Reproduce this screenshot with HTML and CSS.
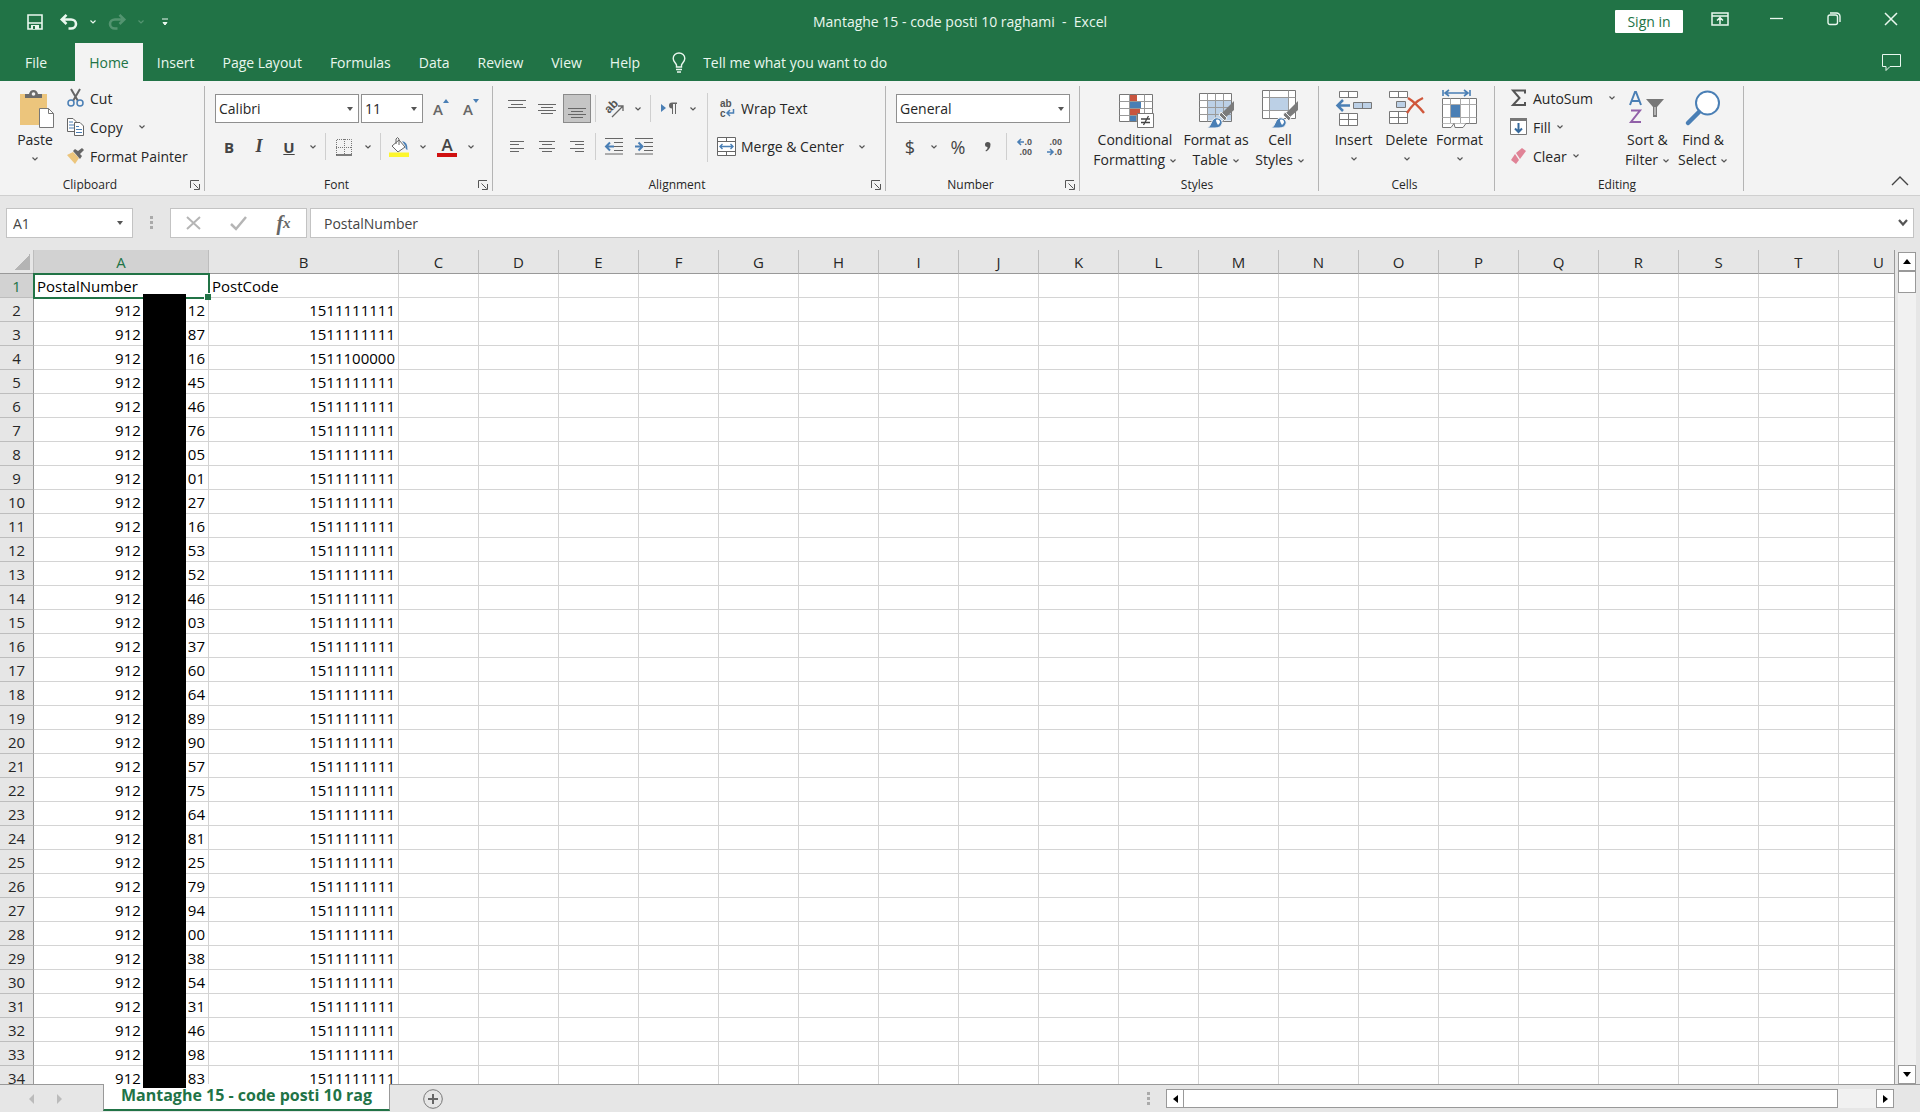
FILE: index.html
```
<!DOCTYPE html>
<html lang="en">
<head>
    <meta charset="UTF-8">
    <meta name="viewport" content="width=device-width, initial-scale=1.0">
    <title>Mantaghe 15 - code posti 10 raghami - Excel</title>
    <link rel="stylesheet" href="styles.css">
</head>
<body>
    <!-- shared symbols -->
    <svg class="symbols" aria-hidden="true">
        <symbol id="chev" viewBox="0 0 8 8"><path d="M1.5 2.5 4 5l2.5-2.5" fill="none" stroke="currentColor" stroke-width="1.2"/></symbol>
        <symbol id="launch" viewBox="0 0 10 10"><path d="M.5 8V.5H9M3.500 3.500 8.500 8.500M9.500 4v5.500H4" fill="none" stroke="#555"/></symbol>
        <symbol id="brush" viewBox="0 0 28 28">
            <path d="M27 0v9l-8 7-4-4z" fill="#7b7b7b"/>
            <path d="m14 11 6 6-2 3-6-6z" fill="#7b7b7b" stroke="#f3f3f3"/>
            <path d="M0 27c4-1 4-8 8-10 4-1 8 2 7 6-1 3-4 4-7 4z" fill="#4a7fb5" stroke="#f3f3f3"/>
            <path d="M9 19c2-1 4 0 4 2 0 1-1 2-2 3-1-2-2-3-2-5z" fill="#fff"/>
        </symbol>
    </svg>

    <header class="titlebar">
        <div class="quick">
            <button class="qbtn" aria-label="Save"><svg width="16" height="16" viewBox="0 0 16 16"><path d="M1 1h14v14H1zM1 9h14" fill="none" stroke="#e9f7ee" stroke-width="1.600"/><path d="M4 11h8v4H4z" fill="#e9f7ee"/><path d="M6 12h2v3H6z" fill="#217346"/></svg></button>
            <button class="qbtn" aria-label="Undo"><svg width="18" height="16" viewBox="0 0 18 16"><path d="M1.500 5.500H11a5 4.500 0 0 1 0 9H8.500M6.500.8 1.800 5.500 6.500 10" fill="none" stroke="#e9f7ee" stroke-width="2.600"/></svg></button>
            <button class="qchev" aria-label="Undo list"><svg class="chev"><use href="#chev"/></svg></button>
            <button class="qbtn faded" aria-label="Redo"><svg width="18" height="16" viewBox="0 0 18 16"><path d="M16.500 5.500H7a5 4.500 0 0 0 0 9h2.500M11.500.8l4.700 4.700-4.700 4.500" fill="none" stroke="#e9f7ee" stroke-width="2.600"/></svg></button>
            <button class="qchev faded" aria-label="Redo list"><svg class="chev"><use href="#chev"/></svg></button>
            <button class="qbtn" aria-label="Customize Quick Access Toolbar"><svg width="6" height="8" viewBox="0 0 6 8"><path d="M0 1h6M1 4.500h4L3 7z" fill="#e9f7ee" stroke="#e9f7ee"/></svg></button>
        </div>
        <div class="doc-title">Mantaghe 15 - code posti 10 raghami  -  Excel</div>
        <div class="window-tools">
            <button class="signin">Sign in</button>
            <button class="wbtn" aria-label="Ribbon Display Options"><svg width="18" height="14" viewBox="0 0 18 14"><path d="M1 1h16v12H1zM1 4h16M9 12V6M6 8.500 9 5.500l3 3" fill="none" stroke="#e9f7ee" stroke-width="1.500"/></svg></button>
            <button class="wbtn" aria-label="Minimize"><svg width="14" height="14" viewBox="0 0 14 14"><path d="M0 6.500h13" stroke="#e9f7ee" stroke-width="1.300"/></svg></button>
            <button class="wbtn" aria-label="Restore"><svg width="14" height="14" viewBox="0 0 14 14"><rect x="1" y="3" width="9.500" height="9.500" rx="2" fill="none" stroke="#e9f7ee" stroke-width="1.400"/><path d="M3 1h6.500a3.500 3.500 0 0 1 3.500 3.500V10" fill="none" stroke="#e9f7ee" stroke-width="1.400"/></svg></button>
            <button class="wbtn" aria-label="Close"><svg width="14" height="14" viewBox="0 0 14 14"><path d="m1 1 12 12M13 1 1 13" stroke="#e9f7ee" stroke-width="1.500"/></svg></button>
        </div>
    </header>

    <nav class="tabs">
        <button class="tab file">File</button>
        <button class="tab active">Home</button>
        <button class="tab">Insert</button>
        <button class="tab">Page Layout</button>
        <button class="tab">Formulas</button>
        <button class="tab">Data</button>
        <button class="tab">Review</button>
        <button class="tab">View</button>
        <button class="tab">Help</button>
        <button class="tab tell"><svg width="14" height="21" viewBox="0 0 14 21"><path d="M4.500 15v-2C4 11 1.200 9.500 1.200 6.500a5.800 5.500 0 0 1 11.600 0C12.800 9.500 10 11 9.500 13v2zM4 17.500h6M5 20h4" fill="none" stroke="#e9f7ee" stroke-width="1.400"/></svg>Tell me what you want to do</button>
        <button class="comment" aria-label="Comments"><svg width="19" height="17" viewBox="0 0 19 17"><path d="M.5.5h18v12H8l-4 4v-4H.5z" fill="none" stroke="#e9f7ee"/></svg></button>
    </nav>

    <div class="ribbon">
        <section class="group clipboard">
            <div class="group-body">
                <button class="large">
                    <svg width="36" height="40" viewBox="0 0 36 40"><path d="M3 4h27v31H3z" fill="#ecc57c"/><path d="M8 8V4h4q1-4 4.500-4T21 4h4v4z" fill="#6b6b6b"/><circle cx="16.500" cy="4" r="1.800" fill="#f3f3f3"/><path d="M22.500 18.500h9l5 5v14h-14z" fill="#fff" stroke="#777"/><path d="M31.500 18.500v5h5" fill="none" stroke="#777"/></svg>
                    <span>Paste</span><svg class="chev"><use href="#chev"/></svg>
                </button>
                <div class="stack">
                    <button class="small"><svg width="17" height="18" viewBox="0 0 17 18"><path d="m4 0 7 12M13 0 6 12" stroke="#666" stroke-width="2"/><circle cx="4" cy="14" r="3" fill="none" stroke="#4a7fb5" stroke-width="1.500"/><circle cx="13" cy="14" r="3" fill="none" stroke="#4a7fb5" stroke-width="1.500"/></svg>Cut</button>
                    <button class="small"><svg width="17" height="18" viewBox="0 0 17 18"><path d="M.5.5H6l3 3v10H.5z" fill="#fff" stroke="#666"/><path d="M2 4h4M2 7h5M2 10h5" stroke="#4a7fb5"/><path d="M7.500 4.500h5.500l3.500 3.500v9.500h-9z" fill="#fff" stroke="#666"/><path d="M9 8.500h3M9 11.500h6M9 14.500h6" stroke="#4a7fb5"/></svg>Copy<svg class="chev far"><use href="#chev"/></svg></button>
                    <button class="small"><svg width="17" height="16" viewBox="0 0 17 16"><path d="m0 7 6-3 6 6-4 6z" fill="#ecc57c"/><path d="m6 3 2-2 3 2 4-3 2 2-4 4 2 2-2 3z" fill="#666"/></svg>Format Painter</button>
                </div>
            </div>
            <div class="group-label"><span>Clipboard</span><button class="launcher" aria-label="Clipboard options"><svg width="10" height="10"><use href="#launch"/></svg></button></div>
        </section>

        <section class="group font">
            <div class="group-body">
                <div class="rows">
                    <div class="row">
                        <div class="combo font-name"><select aria-label="Font"><option>Calibri</option></select></div>
                        <div class="combo font-size"><select aria-label="Font size"><option>11</option></select></div>
                        <button class="tool grow" aria-label="Increase font size">A<svg width="6" height="4" viewBox="0 0 6 4"><path d="m0 4 3-4 3 4z" fill="#4a7fb5"/></svg></button>
                        <button class="tool grow" aria-label="Decrease font size">A<svg width="6" height="4" viewBox="0 0 6 4"><path d="m0 0 3 4 3-4z" fill="#4a7fb5"/></svg></button>
                    </div>
                    <div class="row">
                        <button class="tool"><b>B</b></button>
                        <button class="tool"><i>I</i></button>
                        <button class="tool"><u>U</u></button>
                        <button class="drop" aria-label="Underline styles"><svg class="chev"><use href="#chev"/></svg></button>
                        <span class="sep"></span>
                        <button class="tool" aria-label="Borders"><svg width="18" height="18" viewBox="0 0 18 18"><path d="M1.500 17V1.500h15V17M9.500 1v16M1 9.500h16" fill="none" stroke="#777" stroke-dasharray="1 1"/><path d="M1 17h16" stroke="#555" stroke-width="1.500"/></svg></button>
                        <button class="drop" aria-label="Border styles"><svg class="chev"><use href="#chev"/></svg></button>
                        <span class="sep"></span>
                        <button class="tool" aria-label="Fill color"><svg width="20" height="20" viewBox="0 0 20 20"><path d="m3 9 7-6 6 7-7 5z" fill="#fff" stroke="#666"/><path d="M7 7V2q1.500-3 3 0v6" fill="none" stroke="#666"/><path d="M13 4q6 1 5.500 9-2.500-1-2-4z" fill="#4a7fb5"/><path d="M0 15.500h20V20H0z" fill="#fdf62c"/></svg></button>
                        <button class="drop" aria-label="Fill colors"><svg class="chev"><use href="#chev"/></svg></button>
                        <button class="tool" aria-label="Font color"><span class="font-color">A</span></button>
                        <button class="drop" aria-label="Font colors"><svg class="chev"><use href="#chev"/></svg></button>
                    </div>
                </div>
            </div>
            <div class="group-label"><span>Font</span><button class="launcher" aria-label="Font options"><svg width="10" height="10"><use href="#launch"/></svg></button></div>
        </section>

        <section class="group alignment">
            <div class="group-body">
                <div class="rows">
                    <div class="row">
                        <button class="tool" aria-label="Top align"><svg width="18" height="18" viewBox="0 0 18 18"><path d="M0 .5h18M3 4.500h12M0 7.500h18" stroke="#666"/></svg></button>
                        <button class="tool" aria-label="Middle align"><svg width="18" height="18" viewBox="0 0 18 18"><path d="M0 4.500h18M3 7.500h12M0 10.500h18M3 13.500h12" stroke="#666"/></svg></button>
                        <button class="tool pressed" aria-label="Bottom align"><svg width="18" height="18" viewBox="0 0 18 18"><path d="M0 8.500h18M3 11.500h12M0 14.500h18M3 17.500h12" stroke="#666"/></svg></button>
                        <span class="sep"></span>
                        <button class="tool" aria-label="Orientation"><svg width="20" height="20" viewBox="0 0 20 20"><text transform="translate(10 10) rotate(-45)" text-anchor="middle" class="ab slant">ab</text><path d="m8 18 10.500-10.500M14 7h5v5" fill="none" stroke="#666" stroke-width="1.300"/></svg></button>
                        <button class="drop" aria-label="Orientation list"><svg class="chev"><use href="#chev"/></svg></button>
                        <span class="sep"></span>
                        <button class="tool" aria-label="Text direction"><svg width="16" height="14" viewBox="0 0 16 14"><path d="m0 2 5 4-5 4z" fill="#4a7fb5"/><path d="M11 6.500a3 3 0 0 1 0-6h5V2h-1v10h-1V2h-2v10h-1z" fill="#666"/></svg></button>
                        <button class="drop" aria-label="Text direction list"><svg class="chev"><use href="#chev"/></svg></button>
                    </div>
                    <div class="row">
                        <button class="tool" aria-label="Align left"><svg width="14" height="12" viewBox="0 0 14 12"><path d="M0 .5h14M0 3.500h9M0 7.500h14M0 10.500h9" stroke="#666"/></svg></button>
                        <button class="tool" aria-label="Center"><svg width="16" height="12" viewBox="0 0 16 12"><path d="M0 .5h16M3 3.500h10M0 7.500h16M3 10.500h10" stroke="#666"/></svg></button>
                        <button class="tool" aria-label="Align right"><svg width="14" height="12" viewBox="0 0 14 12"><path d="M0 .5h14M5 3.500h9M0 7.500h14M5 10.500h9" stroke="#666"/></svg></button>
                        <span class="sep"></span>
                        <button class="tool" aria-label="Decrease indent"><svg width="18" height="17" viewBox="0 0 18 17"><path d="M0 .5h18M9 4.500h9M9 8.500h9M9 12.500h9M0 16h18" stroke="#666"/><path d="M9 8.500H2M5 4.500l-4 4 4 4" fill="none" stroke="#4a7fb5" stroke-width="2"/></svg></button>
                        <button class="tool" aria-label="Increase indent"><svg width="18" height="17" viewBox="0 0 18 17"><path d="M0 .5h18M9 4.500h9M9 8.500h9M9 12.500h9M0 16h18" stroke="#666"/><path d="M0 8.500h7M3.500 4.500l4 4-4 4" fill="none" stroke="#4a7fb5" stroke-width="2"/></svg></button>
                    </div>
                </div>
                <span class="sep tall"></span>
                <div class="rows">
                    <button class="small wide"><svg width="19" height="20" viewBox="0 0 19 20"><text x="3" y="8" class="ab">ab</text><text x="3" y="18" class="ab">c</text><path d="M16.500 10v4h-6M13 11l-3 3 3 3" fill="none" stroke="#4a7fb5" stroke-width="1.500"/></svg>Wrap Text</button>
                    <button class="small wide"><svg width="19" height="19" viewBox="0 0 19 19"><path d="M.5.500h18v18H.5zM.5 4.500h18M.5 14.500h18M9.500.500v4M9.500 14.500v4" fill="#fff" stroke="#666"/><path d="M3 9.500h13M5.500 7 3 9.500 5.500 12M13.500 7l2.500 2.500-2.500 2.500" fill="none" stroke="#4a7fb5" stroke-width="1.400"/></svg>Merge &amp; Center<svg class="chev far"><use href="#chev"/></svg></button>
                </div>
            </div>
            <div class="group-label"><span>Alignment</span><button class="launcher" aria-label="Alignment options"><svg width="10" height="10"><use href="#launch"/></svg></button></div>
        </section>

        <section class="group number">
            <div class="group-body">
                <div class="rows">
                    <div class="combo number-format"><select aria-label="Number format"><option>General</option></select></div>
                    <div class="row">
                        <button class="tool sign">$</button>
                        <button class="drop" aria-label="Currencies"><svg class="chev"><use href="#chev"/></svg></button>
                        <button class="tool sign">%</button>
                        <button class="tool" aria-label="Comma style"><svg width="6" height="10" viewBox="0 0 6 10"><path d="M0 2.500a2.700 2.500 0 0 1 5.500 0Q5.500 7 1 9.500L.5 8.500Q3 7 2.500 5A2.500 2.500 0 0 1 0 2.500z" fill="#555"/></svg></button>
                        <span class="sep"></span>
                        <button class="tool" aria-label="Increase decimal"><svg width="16" height="20" viewBox="0 0 16 20"><text x="15" y="8" class="dec">.0</text><text x="15" y="18" class="dec">.00</text><path d="M7 5H1.500M4 2 1 5l3 3" fill="none" stroke="#4a7fb5" stroke-width="1.600"/></svg></button>
                        <button class="tool" aria-label="Decrease decimal"><svg width="16" height="20" viewBox="0 0 16 20"><text x="15" y="8" class="dec">.00</text><text x="15" y="18" class="dec">.0</text><path d="M0 15h6M3 12l3 3-3 3" fill="none" stroke="#4a7fb5" stroke-width="1.600"/></svg></button>
                    </div>
                </div>
            </div>
            <div class="group-label"><span>Number</span><button class="launcher" aria-label="Number options"><svg width="10" height="10"><use href="#launch"/></svg></button></div>
        </section>

        <section class="group styles">
            <div class="group-body">
                <button class="large l-cond">
                    <svg width="38" height="40" viewBox="0 0 38 40"><path d="M3.500 4.500h33v27h-33z" fill="#fff" stroke="#777"/><path d="M3.500 11.500h33M3.500 18.500h33M3.500 25.500h33M13.500 4.500v27M20.500 4.500v27M28.500 4.500v27" stroke="#999"/><path d="M14 5h7v6h-7zM14 19h10v6H14z" fill="#c9553f"/><path d="M14 12h11v6H14zM14 26h6v5h-6z" fill="#4a7fb5"/><path d="M21.500 23.500h16v14h-16z" fill="#fff" stroke="#777"/><path d="M25 29h9M25 32.500h9M32.500 26l-5 9" stroke="#444" stroke-width="1.300"/></svg>
                    <span>Conditional</span><span>Formatting <svg class="chev"><use href="#chev"/></svg></span>
                </button>
                <button class="large l-table">
                    <svg width="38" height="40" viewBox="0 0 38 40"><path d="M2.500 3.500h32v28h-32z" fill="#fff" stroke="#777"/><path d="M11 10.500h23v20H11z" fill="#bcd0e6"/><path d="M2.500 10.500h32M2.500 17.500h32M2.500 24.500h32M10.500 3.500v28M18.500 3.500v28M26.500 3.500v28" stroke="#999"/><use href="#brush" x="10" y="11" width="28" height="28"/></svg>
                    <span>Format as</span><span>Table <svg class="chev"><use href="#chev"/></svg></span>
                </button>
                <button class="large l-cell">
                    <svg width="38" height="40" viewBox="0 0 38 40"><path d="M1.500.5h33v28h-33z" fill="#fff" stroke="#777"/><path d="M9 8h18v12H9z" fill="#bcd0e6"/><path d="M1.500 7.500h33M1.500 20.500h33M8.500.5v28M27.500.5v28" stroke="#999"/><use href="#brush" x="10" y="11" width="28" height="28"/></svg>
                    <span>Cell</span><span>Styles <svg class="chev"><use href="#chev"/></svg></span>
                </button>
            </div>
            <div class="group-label"><span>Styles</span></div>
        </section>

        <section class="group cells">
            <div class="group-body">
                <button class="large l-ins">
                    <svg width="36" height="40" viewBox="0 0 36 40"><path d="M3.500 1.500h18v6h-18zM12.500 1.500v6M3.500 23.500h18v12h-18zM3.500 29.500h18M12.500 23.500v12" fill="#fff" stroke="#777"/><path d="M17.500 12.500h18v6h-18zM26.500 12.500v6" fill="#bcd0e6" stroke="#777"/><path d="M14 15.500H2M7 10l-5.500 5.500L7 21" fill="none" stroke="#4a7fb5" stroke-width="2.500"/></svg>
                    <span>Insert</span><svg class="chev"><use href="#chev"/></svg>
                </button>
                <button class="large l-del">
                    <svg width="36" height="40" viewBox="0 0 36 40"><path d="M.5 1.500h18v6H.5zM9.500 1.500v6M.5 21.500h18v12H.5zM.5 27.500h18M9.500 21.500v12" fill="#fff" stroke="#777"/><path d="M7.500 11.500h9v6h-9z" fill="#bcd0e6" stroke="#777"/><path d="M19 8q8 5 16 15M34 8q-9 4-16 15" fill="none" stroke="#d0573b" stroke-width="2.400"/></svg>
                    <span>Delete</span><svg class="chev"><use href="#chev"/></svg>
                </button>
                <button class="large l-fmt">
                    <svg width="36" height="40" viewBox="0 0 36 40"><path d="M1 0v6M28 0v6M3 3h23M7 0 3 3l4 3M22 0l4 3-4 3" fill="none" stroke="#4a7fb5" stroke-width="1.600"/><path d="M.5 8.500h34v25H.5z" fill="#fff" stroke="#777"/><path d="M.5 14.500h34M.5 27.500h34M8.500 8.500v25M18.500 8.500v25M27.500 8.500v25" stroke="#aaa"/><path d="M9 15h9v12H9z" fill="#4a7fb5"/><path d="M.5 33.500v4H9l3-4 1 4h8l3-4" fill="#fff" stroke="#777"/></svg>
                    <span>Format</span><svg class="chev"><use href="#chev"/></svg>
                </button>
            </div>
            <div class="group-label"><span>Cells</span></div>
        </section>

        <section class="group editing">
            <div class="group-body">
                <div class="stack">
                    <button class="small sum"><svg width="17" height="18" viewBox="0 0 17 18"><path d="M15 4.500V1.500H3L9.500 9 3 16h12v-3" fill="none" stroke="#555" stroke-width="2"/></svg>AutoSum<svg class="chev far"><use href="#chev"/></svg></button>
                    <button class="small"><svg width="17" height="18" viewBox="0 0 17 18"><path d="M.5 1.500h16v15H.5z" fill="#fff" stroke="#777"/><path d="M0 0h17v3H0z" fill="#777"/><path d="M8.500 5v9M5 10.500l3.500 3.500 3.500-3.500" fill="none" stroke="#35699c" stroke-width="2"/></svg>Fill<svg class="chev near"><use href="#chev"/></svg></button>
                    <button class="small"><svg width="17" height="18" viewBox="0 0 17 18"><path d="m6 6 6-5 4 3-6 8z" fill="#e08396"/><path d="m5 7 4 6-3 4-5-4z" fill="#e08396"/></svg>Clear<svg class="chev near"><use href="#chev"/></svg></button>
                </div>
                <button class="large l-sort">
                    <svg width="36" height="40" viewBox="0 0 36 40"><path d="M1 15 6 2h1l5 13M3 11h7" fill="none" stroke="#4a7fb5" stroke-width="2"/><path d="M2 20.500h9L2 32h10" fill="none" stroke="#9160a8" stroke-width="2"/><path d="M17 9h18l-7 8v10h-4V17z" fill="#777"/><path d="M26 17v8" stroke="#f3f3f3"/></svg>
                    <span>Sort &amp;</span><span>Filter <svg class="chev"><use href="#chev"/></svg></span>
                </button>
                <button class="large l-find">
                    <svg width="36" height="40" viewBox="0 0 36 40"><circle cx="22.500" cy="13" r="11.500" fill="#fff" stroke="#4a7fb5" stroke-width="2"/><path d="M14 22 3 33" stroke="#4a7fb5" stroke-width="4.500" stroke-linecap="round"/></svg>
                    <span>Find &amp;</span><span>Select <svg class="chev"><use href="#chev"/></svg></span>
                </button>
            </div>
            <div class="group-label"><span>Editing</span></div>
        </section>
        <button class="collapse" aria-label="Collapse the Ribbon"><svg width="18" height="10" viewBox="0 0 18 10"><path d="m1 9 8-8 8 8" fill="none" stroke="#444" stroke-width="1.400"/></svg></button>
    </div>

    <div class="formula-bar">
        <div class="name-box"><input type="text" value="A1" aria-label="Name Box"></div>
        <span class="dots"></span>
        <div class="fx-buttons">
            <button aria-label="Cancel"><svg width="16" height="14" viewBox="0 0 16 14"><path d="m1 1 13 12M14 1 1 13" stroke="#b5b5b5" stroke-width="2"/></svg></button>
            <button aria-label="Enter"><svg width="17" height="14" viewBox="0 0 17 14"><path d="m1 8 5 5L16 1" fill="none" stroke="#b5b5b5" stroke-width="2.500"/></svg></button>
            <button class="fx" aria-label="Insert Function">f<small>x</small></button>
        </div>
        <div class="formula"><input type="text" value="PostalNumber" aria-label="Formula Bar"><svg width="10" height="8" viewBox="0 0 10 8"><path d="m1 1 4 4.500L9 1" fill="none" stroke="#555" stroke-width="2.200"/></svg></div>
    </div>

    <main class="sheet">
        <div class="grid-wrap">
            <table class="grid">
                <colgroup id="cols"></colgroup>
                <thead><tr id="head"></tr></thead>
                <tbody id="rows"></tbody>
            </table>
        </div>
        <div class="vscroll">
            <button class="arrow" aria-label="Scroll up"><svg width="8" height="5" viewBox="0 0 8 5"><path d="m0 5 4-5 4 5z"/></svg></button>
            <div class="thumb"></div>
            <div class="track"></div>
            <button class="arrow" aria-label="Scroll down"><svg width="8" height="5" viewBox="0 0 8 5"><path d="m0 0 4 5 4-5z"/></svg></button>
        </div>
        <div class="mask"></div>
    </main>

    <footer class="bottom">
        <div class="sheet-nav">
            <button aria-label="Previous sheet"><svg width="5" height="10" viewBox="0 0 5 10"><path d="M5 0v10L0 5z" fill="#bbb"/></svg></button>
            <button aria-label="Next sheet"><svg width="5" height="10" viewBox="0 0 5 10"><path d="M0 0v10l5-5z" fill="#bbb"/></svg></button>
        </div>
        <button class="sheet-tab">Mantaghe 15 - code posti 10 rag</button>
        <button class="new-sheet" aria-label="New sheet"><svg width="20" height="20" viewBox="0 0 20 20"><circle cx="10" cy="10" r="9.300" fill="none" stroke="#777"/><path d="M10 5v10M5 10h10" stroke="#666" stroke-width="2"/></svg></button>
        <span class="dots"></span>
        <div class="hscroll">
            <button class="arrow" aria-label="Scroll left"><svg width="5" height="8" viewBox="0 0 5 8"><path d="M5 0v8L0 4z"/></svg></button>
            <div class="thumb"></div>
            <div class="track"></div>
            <button class="arrow" aria-label="Scroll right"><svg width="5" height="8" viewBox="0 0 5 8"><path d="M0 0v8l5-4z"/></svg></button>
        </div>
    </footer>

    <script>
        const letters = 'ABCDEFGHIJKLMNOPQRSTU'.split('');
        // last two digits of each number, rows 2-34
        const tails = ['12', '87', '16', '45', '46', '76', '05', '01', '27', '16', '53', '52', '46', '03', '37', '60', '64',
            '89', '90', '57', '75', '64', '81', '25', '79', '94', '00', '38', '54', '31', '46', '98', '83'];

        document.getElementById('cols').innerHTML = '<col class="c-num"><col class="c-a"><col class="c-b">' +
            '<col class="c-rest">'.repeat(letters.length - 2);

        document.getElementById('head').innerHTML = '<th class="corner"></th>' +
            letters.map(l => `<th${l === 'A' ? ' class="current"' : ''}>${l}</th>`).join('');

        const empty = '<td></td>'.repeat(letters.length - 2);
        let html = `<tr><th class="current">1</th><td class="selected">PostalNumber</td><td>PostCode</td>${empty}</tr>`;
        tails.forEach((tail, i) => {
            const code = i === 2 ? '1511100000' : '1511111111';
            html += `<tr><th>${i + 2}</th><td class="num">912<span class="hidden-part"></span>${tail}</td><td class="num">${code}</td>${empty}</tr>`;
        });
        document.getElementById('rows').innerHTML = html;
    </script>
</body>
</html>
```
FILE: styles.css
```
* {
    box-sizing: border-box;
}

body {
    margin: 0;
    height: 100vh;
    display: flex;
    flex-direction: column;
    overflow: hidden;
    background-color: #e6e6e6;
    font-family: "Open Sans", "Noto Sans", sans-serif;
    font-size: 14px;
    color: #262626;
}

button, input, select {
    margin: 0;
    padding: 0;
    border: none;
    background: none;
    font: inherit;
    color: inherit;
}

button {
    display: flex;
    align-items: center;
    justify-content: center;
    white-space: nowrap;
}

svg {
    flex: none;
    overflow: visible;
}

.symbols {
    position: absolute;
    width: 0;
    height: 0;
}

.chev {
    width: 8px;
    height: 8px;
    color: #555;
}

/* Title bar */
.titlebar {
    display: grid;
    grid-template-columns: 1fr auto 1fr;
    height: 43px;
    background-color: #217346;
    color: #e9f7ee;
}

.titlebar .chev {
    color: #e9f7ee;
}

.quick {
    display: flex;
    align-items: center;
    padding-left: 18px;
}

.qbtn {
    width: 34px;
    height: 40px;
}

.qchev {
    width: 14px;
    height: 38px;
}

.qbtn.faded, .qchev.faded {
    opacity: 0.25;
}

.doc-title {
    line-height: 43px;
    white-space: pre;
}

.window-tools {
    display: flex;
    justify-content: flex-end;
    padding-right: 1px;
}

.signin {
    align-self: center;
    width: 68px;
    height: 23px;
    margin-right: 8px;
    border-radius: 1px;
    background-color: #fff;
    color: #217346;
}

.wbtn {
    width: 57px;
    height: 38px;
}

/* Tabs */
.tabs {
    display: flex;
    height: 38px;
    padding-right: 1px;
    background-color: #217346;
    color: #e9f7ee;
}

.tab {
    padding: 0 14px;
}

.tab.file {
    padding: 0 28px 0 25px;
}

.tab.active {
    background-color: #f3f3f3;
    color: #217346;
}

.tab.tell {
    gap: 17px;
    padding-left: 18px;
}

.comment {
    margin-left: auto;
    width: 56px;
}

/* Ribbon */
.ribbon {
    display: flex;
    padding: 5px 0 4px;
    background-color: #f3f3f3;
    border-bottom: 1px solid #cfcfcf;
}

.group {
    display: flex;
    flex-direction: column;
    flex: none;
    border-right: 1px solid #b4b4b4;
}

.clipboard { width: 205px; }
.font      { width: 288px; }
.alignment { width: 393px; }
.number    { width: 194px; }
.styles    { width: 239px; }
.cells     { width: 176px; }
.editing   { width: 249px; }

.group-body {
    display: flex;
    height: 93px;
    padding: 0 10px;
}

.clipboard .group-body, .styles .group-body, .cells .group-body {
    padding: 0 8px;
}

.editing .group-body {
    padding: 0 12px;
}

.rows {
    display: flex;
    flex-direction: column;
    gap: 9px;
    padding-top: 8px;
}

.row {
    display: flex;
    align-items: center;
    gap: 2px;
    height: 29px;
}

.group-label {
    display: flex;
    padding-right: 4px;
    font-size: 12px;
    line-height: 12px;
}

.group-label span {
    flex: 1;
    text-align: center;
}

.launcher {
    width: 20px;
    height: 12px;
    justify-content: flex-end;
}

.stack {
    display: flex;
    flex-direction: column;
    gap: 3px;
    margin-top: -1px;
}

.small {
    justify-content: flex-start;
    gap: 6px;
    height: 26px;
    padding-left: 3px;
}

.clipboard .small {
    padding-left: 5px;
}

.small.wide {
    gap: 5px;
    height: 29px;
    padding-left: 9px;
}

.small .far {
    margin-left: 9px;
}

.small .near {
    margin-left: -1px;
}

.large {
    flex-direction: column;
    justify-content: flex-start;
    height: 90px;
    padding-top: 4px;
    line-height: 20px;
}

.large > .chev {
    margin-top: 5px;
}

.clipboard .large { width: 54px; }
.l-cond  { width: 94px; }
.l-table { width: 68px; }
.l-cell  { width: 60px; }
.l-ins, .l-del, .l-fmt { width: 53px; }
.l-sort, .l-find { width: 56px; }

.editing .stack {
    width: 113px;
}

.tool {
    width: 28px;
    height: 29px;
    font-size: 15px;
    color: #444;
}

.tool b, .tool u {
    font-weight: 700;
}

.tool i {
    font-family: "Liberation Serif", serif;
    font-size: 18px;
    font-weight: 700;
}

.tool.grow {
    padding-left: 4px;
    font-weight: 600;
    color: #666;
}

.tool.grow svg {
    align-self: flex-start;
    margin-top: 5px;
}

.tool.sign {
    font-size: 18px;
}

.tool.pressed {
    border: 1px solid #8a8a8a;
    background-color: #c5c5c5;
}

.font-color {
    width: 20px;
    border-bottom: 4px solid #d01010;
    font-size: 17px;
    font-weight: 600;
    line-height: 16px;
}

.drop {
    width: 16px;
    height: 29px;
}

.sep {
    width: 1px;
    height: 27px;
    margin: 0 2px;
    background-color: #cfcfcf;
}

.sep.tall {
    height: 69px;
    margin: 7px 0 0 6px;
}

.ab {
    font: 700 10px "Liberation Sans", sans-serif;
    fill: #555;
}

.ab.slant {
    font-size: 12px;
}

.dec {
    font: 700 9px "Liberation Sans", sans-serif;
    fill: #555;
    text-anchor: end;
}

.combo {
    display: flex;
    align-items: center;
    height: 29px;
    border: 1px solid #8f8f8f;
    background-color: #fff;
}

.combo select {
    flex: 1;
    height: 27px;
    padding-left: 3px;
    appearance: none;
    outline: none;
}

.combo::after, .name-box::after {
    content: "";
    margin-right: 5px;
    border: 3px solid transparent;
    border-top: 4px solid #555;
    border-bottom: none;
}

.font-name { width: 144px; }
.font-size { width: 62px; }
.number-format { width: 174px; }

.collapse {
    align-self: flex-end;
    width: 40px;
    height: 20px;
    margin-left: auto;
}

/* Formula bar */
.formula-bar {
    display: flex;
    padding: 12px 6px;
    height: 54px;
    color: #444;
}

.name-box, .fx-buttons, .formula {
    display: flex;
    align-items: center;
    height: 30px;
    border: 1px solid #c3c3c3;
    background-color: #fff;
}

.name-box {
    width: 127px;
}

.name-box input {
    flex: 1;
    min-width: 0;
    padding-left: 6px;
}

.name-box::after {
    margin-right: 9px;
}

.dots {
    width: 3px;
    height: 13px;
    background: repeating-linear-gradient(#aaa 0 3px, transparent 3px 5px);
}

.formula-bar .dots {
    margin: 8px 17px;
}

.fx-buttons {
    width: 137px;
}

.fx-buttons button {
    flex: 1;
}

.fx {
    font: italic 700 20px "Liberation Serif", serif;
    color: #666;
}

.fx small {
    font-size: 15px;
}

.formula {
    flex: 1;
    margin-left: 3px;
    padding-right: 5px;
}

.formula input {
    flex: 1;
    padding-left: 13px;
}

/* Sheet */
.sheet {
    position: relative;
    display: flex;
    flex: 1;
    min-height: 0;
    padding-right: 4px;
}

.grid-wrap {
    flex: 1;
    overflow: hidden;
    margin-right: 3px;
    border-right: 1px solid #999;
}

.grid {
    table-layout: fixed;
    width: 1919px;
    border-collapse: separate;
    border-spacing: 0;
    background-color: #fff;
    color: #000;
    font-size: 15px;
    line-height: 20px;
}

.c-num  { width: 34px; }
.c-a    { width: 175px; }
.c-b    { width: 190px; }
.c-rest { width: 80px; }

.grid th, .grid td {
    height: 24px;
    padding: 0 3px;
    border-right: 1px solid #d4d4d4;
    border-bottom: 1px solid #d4d4d4;
    text-align: left;
    white-space: nowrap;
}

.grid th {
    padding: 0;
    background-color: #e6e6e6;
    border-color: #bdbdbd;
    font-weight: 400;
    text-align: center;
    color: #262626;
}

.grid thead th {
    border-bottom-color: #999;
}

.grid tbody th {
    border-right-color: #999;
}

.grid th.current {
    background-color: #d2d2d2;
    color: #217346;
}

.grid th.corner {
    background: linear-gradient(135deg, transparent 50%, #b4b4b4 50%) 14px 4px / 16px 16px no-repeat #e6e6e6;
}

.grid td.num {
    text-align: right;
}

.hidden-part {
    display: inline-block;
    width: 47px;
}

.grid .selected {
    position: relative;
    outline: 2px solid #217346;
    outline-offset: -1px;
}

.selected::after {
    content: "";
    position: absolute;
    right: -3px;
    bottom: -3px;
    width: 6px;
    height: 6px;
    border: 1px solid #fff;
    border-width: 1px 0 0 1px;
    background-color: #217346;
}

/* black bar over the private digits */
.mask {
    position: absolute;
    top: 44px;
    bottom: -4px;
    left: 143px;
    width: 43px;
    background-color: #000;
    z-index: 2;
}

.vscroll {
    display: flex;
    flex-direction: column;
    width: 18px;
    padding-top: 2px;
}

.arrow, .thumb {
    border: 1px solid #999;
    background-color: #fff;
}

.arrow {
    width: 18px;
    height: 19px;
}

.vscroll .thumb {
    height: 22px;
}

.track {
    flex: 1;
    background-color: #f1f1f1;
}

/* Bottom bar */
.bottom {
    display: flex;
    align-items: center;
    height: 28px;
    padding-right: 26px;
    border-top: 1px solid #999;
}

.sheet-nav {
    display: flex;
    width: 103px;
    padding-left: 17px;
}

.sheet-nav button {
    width: 28px;
    height: 20px;
}

.sheet-tab {
    align-self: flex-start;
    width: 287px;
    height: 27px;
    margin-top: -1px;
    padding-bottom: 3px;
    border: 1px solid #999;
    border-width: 0 1px 2px;
    border-bottom-color: #217346;
    background-color: #fff;
    font-size: 16px;
    font-weight: 700;
    color: #217346;
}

.new-sheet {
    margin-left: 33px;
}

.bottom .dots {
    margin: 0 16px 0 auto;
}

.hscroll {
    display: flex;
    width: calc(38% + 8px);
}

.hscroll .thumb {
    width: 90%;
    margin-left: -1px;
}
```
